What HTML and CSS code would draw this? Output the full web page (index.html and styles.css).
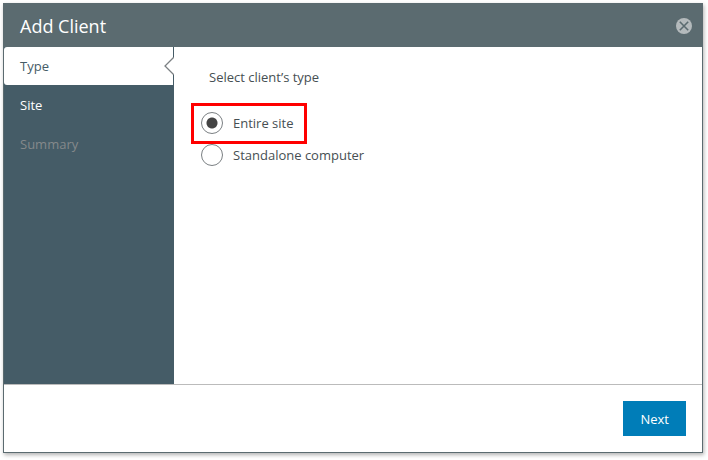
FILE: index.html
```
<!DOCTYPE html>
<html lang="en">
<head>
    <meta charset="UTF-8">
    <meta name="viewport" content="width=device-width, initial-scale=1.0">
    <title>Add Client</title>
    <link rel="stylesheet" href="styles.css">
</head>
<body>
    <div class="dialog" role="dialog" aria-labelledby="dialogTitle">
        <!-- Title bar -->
        <header class="dialog-header">
            <h1 id="dialogTitle">Add Client</h1>
            <button type="button" class="close-btn" aria-label="Close">
                <svg width="16" height="16" viewBox="0 0 16 16">
                    <circle cx="8" cy="8" r="8" fill="#b4babc"/>
                    <path d="M3.8 3.8L12.2 12.2M12.2 3.8L3.8 12.2" stroke="#5b6b70" stroke-width="1.6"/>
                </svg>
            </button>
        </header>

        <div class="dialog-body">
            <!-- Wizard steps -->
            <nav class="steps">
                <a href="#type" class="step active">Type
                    <svg class="notch" width="10" height="18" viewBox="0 0 10 18">
                        <path d="M10 0L1 9L10 18Z" fill="#fff"/>
                        <path d="M10 0L1 9L10 18" fill="none" stroke="#7b8083" stroke-width="1.3"/>
                    </svg>
                </a>
                <a href="#site" class="step">Site</a>
                <a href="#summary" class="step disabled">Summary</a>
            </nav>

            <!-- Client type -->
            <main class="content">
                <fieldset class="options">
                    <legend>Select client’s type</legend>
                    <label class="option highlighted">
                        <input type="radio" name="clientType" value="site" checked>
                        Entire site
                    </label>
                    <label class="option">
                        <input type="radio" name="clientType" value="computer">
                        Standalone computer
                    </label>
                </fieldset>
            </main>
        </div>

        <footer class="dialog-footer">
            <button type="button" class="next-btn">Next</button>
        </footer>
    </div>
</body>
</html>
```
FILE: styles.css
```
* {
    margin: 0;
    padding: 0;
    box-sizing: border-box;
}
body {
    font-family: "Open Sans", "Noto Sans", sans-serif;
    font-size: 13px;
    line-height: 18px;
    color: #464f53;
    background: #fff;
    min-height: 100vh;
    padding: 3px 5px 7px 3px;
    display: flex;
}
button {
    font: inherit;
    border: none;
    cursor: pointer;
}
.dialog {
    flex: 1;
    display: flex;
    flex-direction: column;
    background: #fff;
    border: 1px solid #5b6b70;
    box-shadow: 1px 2px 4px rgba(0, 0, 0, 0.3);
}
/* Header */
.dialog-header {
    display: flex;
    justify-content: space-between;
    align-items: center;
    height: 43px;
    padding: 0 10px 0 16px;
    background: #5b6b70;
}
.dialog-header h1 {
    font-size: 18px;
    font-weight: 500;
    line-height: 24px;
    color: #fff;
}
.close-btn {
    display: flex;
    background: transparent;
}
/* Steps */
.dialog-body {
    flex: 1;
    display: flex;
}
.steps {
    width: 170px;
    display: flex;
    flex-direction: column;
    gap: 1px;
    background: #455c67;
}
.step {
    position: relative;
    padding: 10px 16px;
    font-weight: 500;
    color: #fff;
    text-decoration: none;
}
.step.active {
    margin-right: 1px;
    font-weight: 400;
    color: #455c67;
    background: #fff;
    border-radius: 3px 0 0 3px;
}
.step.disabled {
    font-weight: 400;
    color: #84898b;
}
.notch {
    position: absolute;
    top: 10px;
    right: -1px;
}
/* Content */
.content {
    flex: 1;
    padding: 21px 27px;
}
.options {
    border: none;
    display: flex;
    flex-direction: column;
    align-items: flex-start;
}
.options legend {
    padding: 0 8px;
    margin-bottom: 21px;
}
.option {
    position: relative;
    display: flex;
    align-items: center;
    gap: 10px;
    height: 32px;
}
.option input {
    appearance: none;
    width: 22px;
    height: 22px;
    border: 1px solid #7b8083;
    border-radius: 50%;
    background: #fff;
}
.option input:checked {
    background: radial-gradient(circle, #444 5px, #fff 6px);
}
.highlighted::after {
    content: "";
    position: absolute;
    inset: -4px -13px -5px -10px;
    border: 3px solid #f00;
    z-index: 1;
    pointer-events: none;
}
/* Footer */
.dialog-footer {
    display: flex;
    justify-content: flex-end;
    padding: 16px;
    border-top: 1px solid #bbb;
}
.next-btn {
    height: 35px;
    padding: 0 17px;
    font-weight: 500;
    color: #fff;
    background: #007db8;
}
```
